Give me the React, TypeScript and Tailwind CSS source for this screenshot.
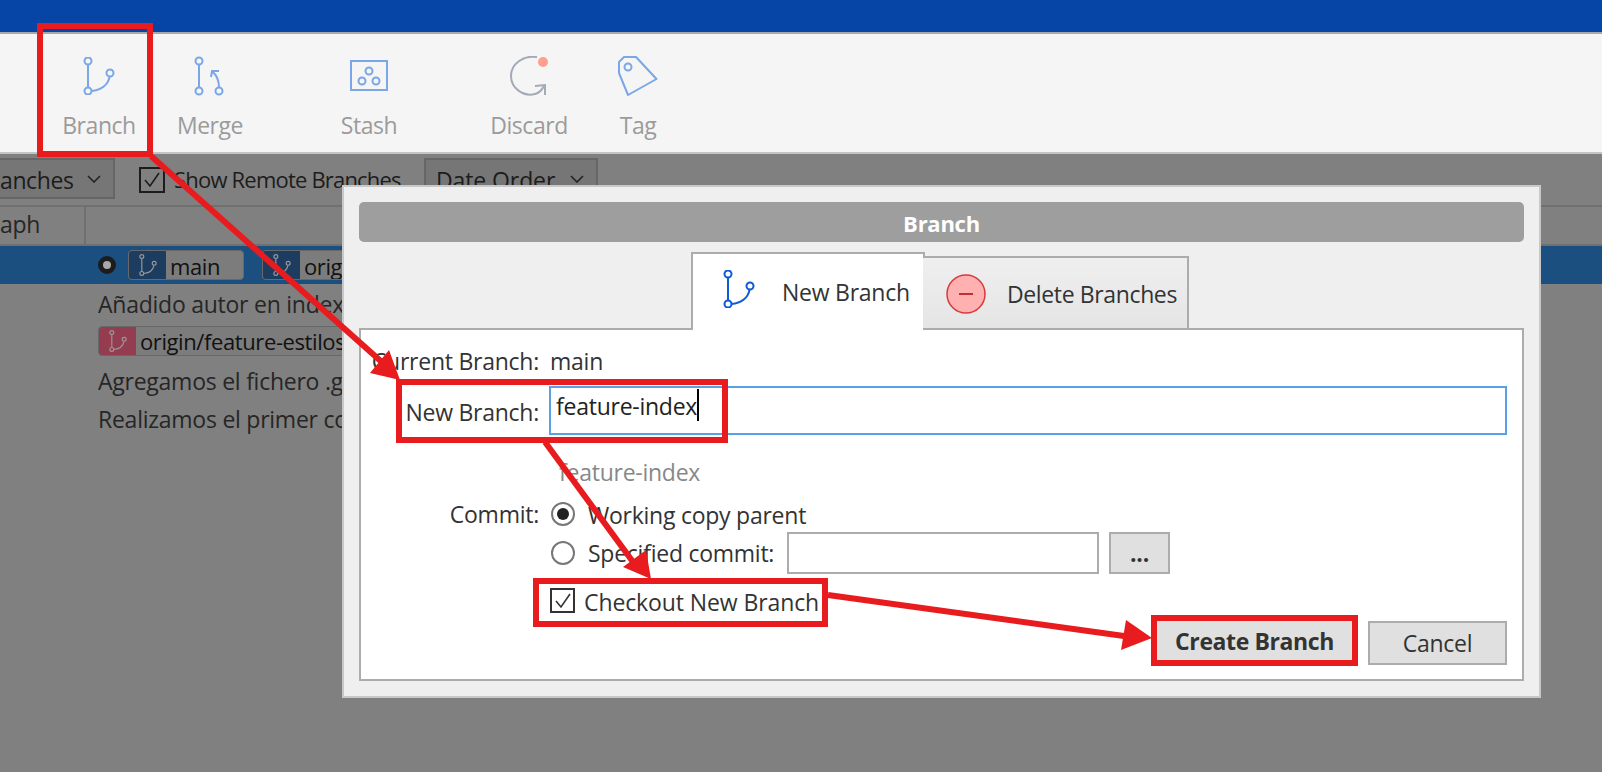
import React from 'react';

const BranchIcon: React.FC<{ color: string; className?: string }> = ({ color, className }) => (
    <svg viewBox="0 0 32 38" className={className} fill="none" stroke={color} strokeWidth="2">
        <circle cx="5" cy="4" r="3.5" />
        <circle cx="5" cy="34" r="3.5" />
        <circle cx="27" cy="16" r="3.5" />
        <path d="M5 8V30M8.5 34C18 33 25 28 26.5 20" />
    </svg>
);

const MergeIcon = () => (
    <svg viewBox="0 0 32 40" className="w-[32px] h-[40px]" fill="none" stroke="#7ba7e6" strokeWidth="2">
        <circle cx="5" cy="5" r="3.5" />
        <circle cx="5" cy="35" r="3.5" />
        <circle cx="25" cy="35" r="3.5" />
        <path d="M5 9V31M25 31C25 25 23 20 19 16M17 21L18 15L25 15" />
    </svg>
);

const StashIcon = () => (
    <svg viewBox="0 0 40 40" className="w-[40px] h-[40px]" fill="none" stroke="#7ba7e6" strokeWidth="2">
        <rect x="2" y="5" width="36" height="29" />
        <circle cx="20" cy="15" r="3.5" />
        <circle cx="13" cy="25" r="3.5" />
        <circle cx="27" cy="25" r="3.5" />
    </svg>
);

const DiscardIcon = () => (
    <svg viewBox="0 0 40 40" className="w-[40px] h-[40px]" fill="none" stroke="#a3aab8" strokeWidth="2">
        <path d="M28 1C14 -1 2 8 2 20C2 32 14 41 26 38C30 37 33 34 35 30" />
        <path d="M26 30L36 29L36 39" />
        <circle cx="34" cy="6" r="5" fill="#ffa08f" stroke="none" />
    </svg>
);

const TagIcon = () => (
    <svg viewBox="0 0 40 40" className="w-[40px] h-[40px]" fill="none" stroke="#7ba7e6" strokeWidth="2">
        <path d="M1 6L6 1H18L38.5 23L10 39L1 17Z" strokeLinejoin="round" />
        <circle cx="10" cy="11" r="3.5" />
    </svg>
);

const ToolButton: React.FC<{ label: string; className?: string; children: React.ReactNode }> = ({ label, className, children }) => (
    <div className={`w-[100px] flex flex-col items-center ${className ?? ''}`}>
        <div className="h-[40px] flex items-center justify-center">{children}</div>
        <span className="mt-[11px] text-[23px] leading-[36px] text-[#9b9b9b] tracking-[-0.45px]">{label}</span>
    </div>
);

const Chevron = () => (
    <svg viewBox="0 0 14 8" className="w-[14px] h-[8px]" fill="none" stroke="#222" strokeWidth="1.6">
        <path d="M1 1L7 7L13 1" />
    </svg>
);

const RefBadge: React.FC<{ label: string; tone: string; className?: string; labelClass?: string }> = ({ label, tone, className, labelClass }) => (
    <div className={`h-[30px] flex items-center rounded-[4px] border border-[#686868] overflow-hidden ${className ?? ''}`}>
        <div className={`w-[37px] h-full shrink-0 flex items-center justify-center ${tone}`}>
            <BranchIcon color="#9a9a9a" className="w-[18px] h-[22px]" />
        </div>
        <span className={`pl-[4px] whitespace-nowrap text-[22px] text-[#111] tracking-[-0.4px] ${labelClass ?? ''}`}>{label}</span>
    </div>
);

// arrows and red frames drawn over the screenshot
const Annotations = () => (
    <svg viewBox="0 0 1602 772" className="absolute inset-0 w-[1602px] h-[772px] pointer-events-none">
        <g fill="none" stroke="#e81c1f" strokeWidth="6">
            <rect x="40" y="26" width="110" height="128" />
            <rect x="399" y="382" width="326" height="58" />
            <rect x="536" y="581" width="289" height="43" />
            <rect x="1154" y="618" width="201" height="45" />
            <path d="M545 442L636 566" />
            <path d="M828 595L1124 636" />
            <path d="M151 156L384 364" />
        </g>
        <g fill="#e81c1f">
            <path d="M400 380L370 373L389 350Z" />
            <path d="M651 579L623 567L646 550Z" />
            <path d="M1152 638L1126 620L1121 650Z" />
        </g>
    </svg>
);

const App: React.FC = () => {
    return (
        <div className="relative w-[1602px] h-[772px] overflow-hidden bg-[#808080] font-['Open_Sans',sans-serif]">
            <div className="h-[32px] bg-[#0645a5]" />

            {/* Toolbar */}
            <div className="h-[122px] bg-[#f5f5f5] border-y-2 border-t-[#a8a8a8] border-b-[#c4c4c4] flex pl-[49px] pt-[22px]">
                <ToolButton label="Branch"><BranchIcon color="#7ba7e6" className="w-[32px] h-[38px]" /></ToolButton>
                <ToolButton label="Merge" className="ml-[11px]"><MergeIcon /></ToolButton>
                <ToolButton label="Stash" className="ml-[59px]"><StashIcon /></ToolButton>
                <ToolButton label="Discard" className="ml-[60px]"><DiscardIcon /></ToolButton>
                <ToolButton label="Tag" className="ml-[9px]"><TagIcon /></ToolButton>
            </div>

            {/* Filter row */}
            <div className="h-[51px] flex items-start pt-[4px] text-[#1c1c1c]">
                <div className="w-[115px] h-[41px] bg-[#767676] border-2 border-l-0 border-[#666] flex items-center justify-between pr-[12px] text-[23px] tracking-[-0.4px]">
                    <span className="pt-[3px]">anches</span>
                    <Chevron />
                </div>
                <div className="ml-[24px] mt-[9px] w-[26px] h-[26px] border-2 border-[#1c1c1c] flex items-center justify-center">
                    <svg viewBox="0 0 20 20" className="w-[20px] h-[20px]" fill="none" stroke="#1c1c1c" strokeWidth="1.6">
                        <path d="M3 10L8 16L17 3" />
                    </svg>
                </div>
                <span className="ml-[9px] mt-[5px] w-[226px] whitespace-nowrap text-[22px] tracking-[-0.8px]">Show Remote Branches</span>
                <div className="ml-[24px] w-[174px] h-[41px] bg-[#767676] border-2 border-[#666] flex items-center justify-between pl-[10px] pr-[12px] text-[23px] tracking-[-0.1px]">
                    <span className="pt-[3px]">Date Order</span>
                    <Chevron />
                </div>
            </div>

            {/* Commit list, cut off by the dialog */}
            <div className="h-[41px] border-y-2 border-[#707070] flex text-[23px] text-[#262626] tracking-[-0.25px]">
                <div className="w-[86px] border-r-2 border-[#707070]">aph</div>
            </div>
            <div className="h-[38px] bg-[#1a4f80] flex items-center pl-[98px]">
                <div className="w-[18px] h-[18px] rounded-full border-[5px] border-[#1c1c1c] bg-[#a8a8a8]" />
                <RefBadge label="main" tone="bg-[#1c3c60]" labelClass="pt-[3px]" className="ml-[12px] w-[116px] bg-[#7c7c7c]" />
                <RefBadge label="orig" tone="bg-[#1c3c60]" labelClass="pt-[3px]" className="ml-[18px] w-[160px] bg-[#7c7c7c]" />
            </div>
            <div className="ml-[98px] w-[244px] overflow-hidden whitespace-nowrap text-[23px] text-[#262626] tracking-[-0.25px]">
                <div className="h-[38px] flex items-center mt-[1px] mb-[1px]">Añadido autor en index</div>
                <RefBadge label="origin/feature-estilos" tone="bg-[#943c50]" className="mt-[3px] w-[260px] bg-[#7c7c7c]" />
                <div className="h-[38px] flex items-center mt-[6px]">Agregamos el fichero .g</div>
                <div className="h-[38px] flex items-center">Realizamos el primer co</div>
            </div>

            {/* Branch dialog */}
            <div className="absolute left-[342px] top-[185px] w-[1199px] h-[513px] border-2 border-[#c8c8c8] bg-[#efefef] px-[15px] pt-[15px] text-[#333] text-[23px] tracking-[-0.25px]">
                <div className="h-[40px] rounded-[5px] bg-[#9e9e9e] flex items-center justify-center pt-[3px] text-white font-bold text-[22px]">Branch</div>

                <div className="mt-[10px] ml-[332px] flex items-end h-[78px] relative z-10">
                    <div className="w-[234px] h-[78px] bg-white border-2 border-b-0 border-[#acacac] flex items-start pt-[16px] pl-[30px]">
                        <BranchIcon color="#0f5bd5" className="w-[32px] h-[38px]" />
                        <span className="ml-[27px] mt-[5px]">New Branch</span>
                    </div>
                    <div className="w-[266px] h-[74px] -ml-[2px] bg-gradient-to-b from-[#efefef] to-[#e5e5e5] border-2 border-l-0 border-[#acacac] flex items-start pt-[16px] pl-[23px]">
                        <svg viewBox="0 0 40 40" className="w-[40px] h-[40px]">
                            <circle cx="20" cy="20" r="19" fill="#ffb0b0" stroke="#d83a3a" strokeWidth="1.5" />
                            <path d="M13 20H27" stroke="#c03030" strokeWidth="2" />
                        </svg>
                        <span className="ml-[21px] mt-[3px] tracking-[-0.37px]">Delete Branches</span>
                    </div>
                </div>

                <div className="-mt-[2px] h-[353px] bg-white border-2 border-[#acacac] pt-[14px]">
                    <div className="grid grid-cols-[178px_1fr] gap-x-[10px] pr-[15px]">
                        <div className="h-[36px] flex items-center justify-end pb-[2px]">Current Branch:</div>
                        <div className="h-[36px] flex items-center pl-[1px] pb-[2px]">main</div>

                        <div className="mt-[6px] h-[49px] flex items-center justify-end pt-[4px]">New Branch:</div>
                        <div className="mt-[6px] h-[49px] border-2 border-[#5aa0e6] flex items-start pl-[5px] pt-[1px]">
                            <span className="text-[#222]">feature-index</span>
                            <span className="w-[2px] h-[32px] bg-black" />
                        </div>

                        <div />
                        <div className="mt-[19px] h-[36px] flex items-center pl-[10px] text-[#888]">feature-index</div>

                        <div className="mt-[6px] h-[36px] flex items-center justify-end">Commit:</div>
                        <div className="mt-[6px] h-[36px] flex items-center pl-[2px]">
                            <div className="w-[24px] h-[24px] rounded-full border-2 border-[#777] flex items-center justify-center">
                                <div className="w-[12px] h-[12px] rounded-full bg-[#222]" />
                            </div>
                            <span className="ml-[13px] pt-[3px]">Working copy parent</span>
                        </div>

                        <div />
                        <div className="h-[42px] flex items-center pl-[2px]">
                            <div className="w-[24px] h-[24px] rounded-full border-2 border-[#777]" />
                            <span className="ml-[13px] w-[187px] whitespace-nowrap">Specified commit:</span>
                            <div className="ml-[12px] w-[312px] h-[42px] border-2 border-[#acacac]" />
                            <div className="ml-[10px] w-[61px] h-[42px] border-2 border-[#acacac] bg-[#e0e0e0] flex items-center justify-center font-bold">...</div>
                        </div>

                        <div />
                        <div className="mt-[14px] h-[25px] flex items-center pl-[1px]">
                            <div className="w-[25px] h-[25px] border-2 border-[#333] flex items-center justify-center">
                                <svg viewBox="0 0 20 20" className="w-[20px] h-[20px]" fill="none" stroke="#333" strokeWidth="1.6">
                                    <path d="M3 10L8 16L17 3" />
                                </svg>
                            </div>
                            <span className="ml-[9px] pt-[3px] tracking-[-0.1px]">Checkout New Branch</span>
                        </div>
                    </div>

                    <div className="mt-[8px] pr-[15px] flex justify-end gap-[14px]">
                        <div className="w-[199px] h-[44px] bg-[#e0e0e0] flex items-center justify-center pb-[3px] font-bold tracking-[-0.4px]">Create Branch</div>
                        <div className="w-[139px] h-[44px] bg-[#e0e0e0] border-2 border-[#acacac] flex items-center justify-center pt-[1px]">Cancel</div>
                    </div>
                </div>
            </div>

            <Annotations />
        </div>
    );
};

export default App;
